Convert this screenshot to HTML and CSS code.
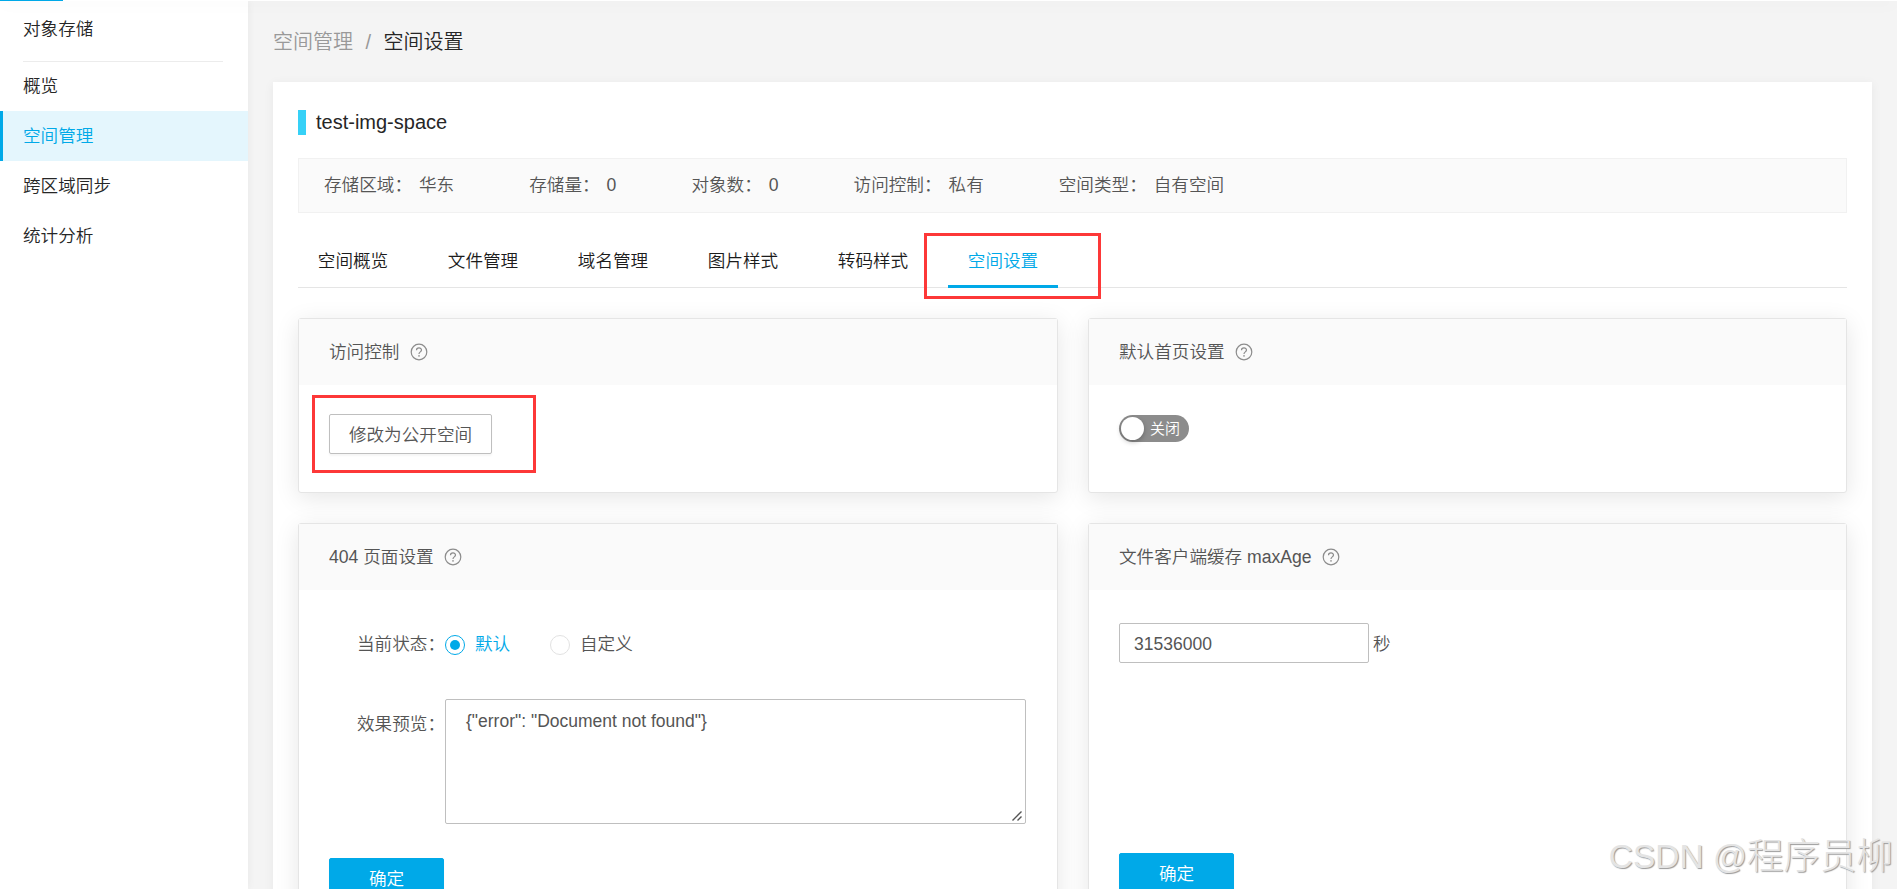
FILE: index.html
```html
<!DOCTYPE html>
<html lang="zh-CN">
<head>
<meta charset="utf-8">
<title>空间设置</title>
<link rel="stylesheet" href="styles.css">
</head>
<body>
<svg class="defs" width="0" height="0">
  <symbol id="help" viewBox="0 0 18 18">
    <circle cx="9" cy="9" r="7.8" fill="none" stroke="currentColor" stroke-width="1.2"/>
    <path d="M6.5 7.2C6.5 4.2 11.5 4.2 11.5 7.1C11.5 8.9 9 8.9 9 11" fill="none" stroke="currentColor" stroke-width="1.2"/>
    <circle cx="9" cy="12.9" r=".8" fill="currentColor"/>
  </symbol>
</svg>
<header class="topbar"><div class="topbar-active"></div></header>
<div class="layout">
  <nav class="sidebar">
    <div class="side-title">对象存储</div>
    <a class="side-item">概览</a>
    <a class="side-item active">空间管理</a>
    <a class="side-item">跨区域同步</a>
    <a class="side-item">统计分析</a>
  </nav>
  <main class="main">
    <div class="breadcrumb"><span>空间管理</span><span class="sep">/</span><span class="current">空间设置</span></div>
    <section class="panel">
      <h1 class="space-name">test-img-space</h1>
      <div class="info">
        <div class="info-item"><span>存储区域：</span><span>华东</span></div>
        <div class="info-item"><span>存储量：</span><span>0</span></div>
        <div class="info-item"><span>对象数：</span><span>0</span></div>
        <div class="info-item"><span>访问控制：</span><span>私有</span></div>
        <div class="info-item"><span>空间类型：</span><span>自有空间</span></div>
      </div>
      <div class="tabs">
        <a class="tab">空间概览</a>
        <a class="tab">文件管理</a>
        <a class="tab">域名管理</a>
        <a class="tab">图片样式</a>
        <a class="tab">转码样式</a>
        <a class="tab active">空间设置<i class="mark mark-tab"></i></a>
      </div>
      <div class="cards">
        <article class="card">
          <header class="card-head">访问控制<svg class="help"><use href="#help"/></svg></header>
          <div class="card-body body-access">
            <div class="btn-wrap"><button class="btn">修改为公开空间</button><i class="mark mark-btn"></i></div>
          </div>
        </article>
        <article class="card">
          <header class="card-head">默认首页设置<svg class="help"><use href="#help"/></svg></header>
          <div class="card-body body-index">
            <div class="switch"><span class="knob"></span><span class="switch-text">关闭</span></div>
          </div>
        </article>
        <article class="card">
          <header class="card-head">404 页面设置<svg class="help"><use href="#help"/></svg></header>
          <div class="card-body body-404">
            <div class="row row-state">
              <span class="label">当前状态：</span>
              <span class="radio checked"></span><span class="radio-text on">默认</span>
              <span class="radio second"></span><span class="radio-text custom">自定义</span>
            </div>
            <div class="row row-preview">
              <span class="label">效果预览：</span>
              <div class="textarea">{"error": "Document not found"}
                <svg class="grip" viewBox="0 0 10 10"><path d="M.5 9.5L9.5.5M5.5 9.5L9.5 5.5" stroke="#555" stroke-width="1.4" fill="none"/></svg>
              </div>
            </div>
            <button class="btn primary">确定</button>
          </div>
        </article>
        <article class="card">
          <header class="card-head">文件客户端缓存 maxAge<svg class="help"><use href="#help"/></svg></header>
          <div class="card-body body-age">
            <div class="row"><div class="input">31536000</div><span class="unit">秒</span></div>
            <button class="btn primary">确定</button>
          </div>
        </article>
      </div>
    </section>
  </main>
</div>
<div class="watermark"><span>CSDN @</span><span class="author">程序员柳</span></div>
</body>
</html>
```
FILE: styles.css
```css
* { box-sizing: border-box; }
html { height: 100%; overflow: hidden; }
body {
  margin: 0;
  height: 889px;
  overflow: hidden;
  position: relative;
  background: #f4f4f4;
  color: #555;
  font: 350 17.6px/26px "Liberation Sans", "Noto Sans CJK SC", sans-serif;
}
.defs { position: absolute; }
.topbar { height: 1px; background: #fff; position: relative; z-index: 2; box-shadow: 0 2px 15px rgba(0,0,0,.16); }
.topbar-active { width: 63px; height: 1px; background: #00a9e8; }
.layout { display: flex; height: 888px; overflow: hidden; }
.sidebar { width: 248px; flex: none; background: #fff; box-shadow: 0 0 8px rgba(0,0,0,.06); color: #262626; }
.side-title { height: 61px; margin: 0 25px 0 23px; padding-top: 15px; border-bottom: 1px solid #ececec; }
.side-item { display: block; height: 50px; line-height: 50px; padding-left: 23px; }
.side-item:first-of-type { height: 49px; line-height: 49px; }
.side-item.active { color: #00a9e8; background: #e4f6fd; border-left: 3px solid #00a9e8; padding-left: 20px; }
.main { flex: 1; padding: 0 25px; }
.breadcrumb { height: 81px; padding-top: 26px; font-size: 20px; line-height: 30px; color: #999; display: flex; }
.sep { margin: 0 12.5px; }
.current { color: #262626; }
.panel { height: 1000px; background: #fff; padding: 26px 25px 0; box-shadow: 0 2px 10px rgba(0,0,0,.06); }
.space-name { margin: 0; height: 50px; display: flex; gap: 10px; font-size: 20px; line-height: 29px; font-weight: 400; color: #262626; }
.space-name::before { content: ""; width: 8px; height: 25px; margin-top: 2px; background: #36d1f7; }
.info { height: 55px; display: flex; align-items: center; gap: 75px; padding: 0 25px 2px; background: #fafafa; border: 1px solid #f1f1f1; }
.info-item { display: flex; gap: 7px; }
.tabs { height: 75px; display: flex; gap: 20px; align-items: flex-end; border-bottom: 1px solid #e5e5e5; color: #1c1c1c; }
.tab { height: 56px; width: 110px; text-align: center; line-height: 58px; margin-bottom: -1px; position: relative; }
.tab.active { color: #00a9e8; border-bottom: 3px solid #00a9e8; }
.mark { position: absolute; border: 3px solid #fd3838; z-index: 1; }
.mark-tab { left: -24px; top: 1px; width: 177px; height: 66px; }
.mark-btn { left: -17px; top: -19px; width: 224px; height: 78px; }
.cards { display: grid; grid-template-columns: 760px 759px; grid-template-rows: 175px 450px; gap: 30px; margin-top: 30px; }
.card { border: 1px solid #e5e5e5; border-radius: 3px; background: #fff; box-shadow: 0 5px 25px rgba(0,0,0,.1); }
.card-head { height: 66px; padding: 0 30px 1px; background: #fafafa; display: flex; align-items: center; gap: 10.5px; }
.help { width: 18px; height: 18px; color: #8c8c8c; }
.card-body { padding: 29px 30px 0; }
.btn-wrap { position: relative; width: 163px; }
.btn { display: block; width: 163px; height: 40px; padding: 1px 0 0; border: 1px solid #bfbfbf; border-radius: 2px; background: #fff; color: inherit; font: inherit; box-shadow: 0 2px 2px rgba(0,0,0,.04); }
.btn.primary { width: 115px; background: #00a9e8; border-color: #00a9e8; color: #fff; }
.body-index { padding-top: 30px; }
.switch { width: 70px; height: 27px; padding: 2px; border-radius: 14px; background: #8c8c8c; display: flex; align-items: center; gap: 6px; }
.knob { width: 23px; height: 23px; border-radius: 50%; background: #fff; box-shadow: 0 2px 5px rgba(0,0,0,.25); }
.switch-text { color: #fff; font-size: 15px; font-weight: 350; }
.row { display: flex; }
.body-404 { padding-top: 40px; }
.row-state { height: 69px; padding-left: 28px; line-height: 28px; }
.label { width: 88px; white-space: nowrap; }
.radio { width: 20px; height: 20px; margin-top: 5px; border: 1px solid #e2e2e2; border-radius: 50%; display: grid; place-items: center; }
.radio.checked { border-color: #00a9e8; }
.radio.checked::before { content: ""; width: 10px; height: 10px; border-radius: 50%; background: #00a9e8; }
.radio-text { margin-left: 10px; }
.radio-text.on { color: #00a9e8; width: 75px; }
.row-preview { padding-left: 28px; height: 159px; }
.row-preview .label { padding-top: 12px; }
.textarea { position: relative; width: 581px; height: 125px; border: 1px solid #bfbfbf; border-radius: 2px; padding: 8px 20px; font-size: 17.5px; }
.grip { position: absolute; right: 3px; bottom: 2px; width: 10px; height: 10px; }
.body-age { padding-top: 33px; }
.body-age .row { height: 230px; }
.input { width: 250px; height: 40px; border: 1px solid #bfbfbf; border-radius: 2px; padding: 7px 14px; font-size: 17.5px; }
.unit { padding: 8px 0 0 4px; }
.watermark { position: absolute; right: 4px; bottom: 9px; z-index: 3; font-size: 33.5px; font-weight: 300; line-height: 46px; color: #e4e4e4; text-shadow: 1px 1px 1px #999; display: flex; white-space: nowrap; }
.author { font-size: 36.5px; }
```
